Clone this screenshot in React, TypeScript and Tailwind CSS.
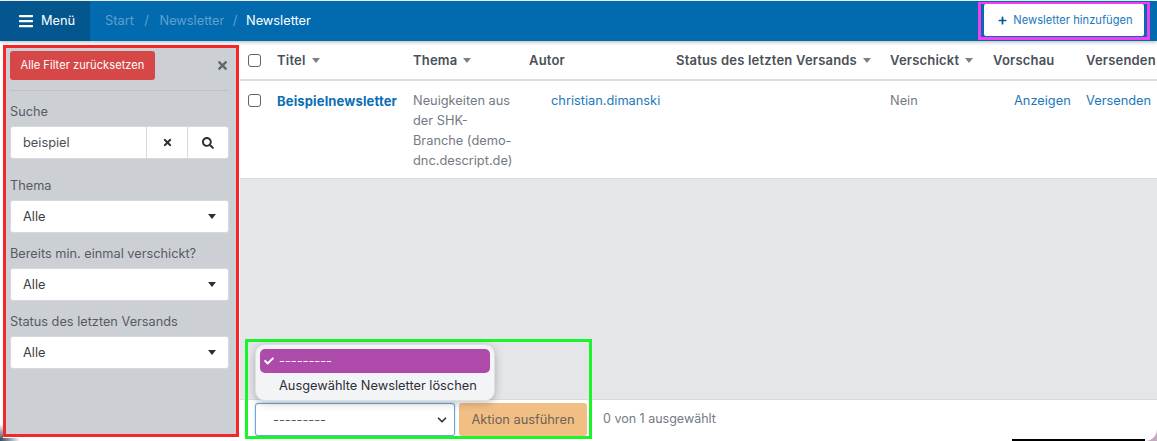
import React from "react";
import { FaBars, FaPlus, FaSearch, FaTimes, FaCheck } from "react-icons/fa";
import { ChevronDown } from "lucide-react";

const Caret = ({ color = "border-t-[#7a7f88]" }: { color?: string }) => (
  <span className={`inline-block w-0 h-0 border-x-[4px] border-x-transparent border-t-[5px] ${color}`} />
);

const Th = ({ children, sort }: { children: React.ReactNode; sort?: boolean }) => (
  <div className="flex items-center gap-[6px] text-[13px] tracking-[0.2px] font-semibold text-[#4b5058]">
    <span>{children}</span>
    {sort && <Caret />}
  </div>
);

const FilterSelect = ({ label, cls }: { label: string; cls: string }) => (
  <div className={cls}>
    <div className="text-[12.75px] leading-[19px] text-[#565b63]">{label}</div>
    <div className="mt-[5px] h-[33px] bg-white rounded-[3px] border border-[#d6d8dc] flex items-center justify-between pl-[12px] pr-[12px] text-[12.8px] text-[#3b3f46]">
      <span>Alle</span>
      <Caret color="border-t-[#2b2f36]" />
    </div>
  </div>
);

const cols = "grid grid-cols-[37px_136px_116px_147px_214px_103px_93px_71px]";

export default function App() {
  return (
    <div className="relative w-[1157px] h-[441px] overflow-hidden bg-white text-[12.8px] font-['Inter','Liberation_Sans',sans-serif]">
      <header className="mt-[1px] h-[40px] bg-[#026bb0] flex items-stretch shadow-[0_1px_4px_rgba(0,0,0,0.3)] relative z-10">
        <div className="w-[90px] bg-[#04568e] flex items-center gap-[7px] pl-[18px] text-white">
          <FaBars size={16} />
          <span>Menü</span>
        </div>
        <nav className="flex items-center pl-[15px] text-[#5fa0cd]">
          <span>Start</span>
          <span className="mx-[10.5px]">/</span>
          <span>Newsletter</span>
          <span className="mx-[8.5px]">/</span>
          <span className="text-white">Newsletter</span>
        </nav>
        <div className="ml-auto mr-[7px] mt-[1px] h-[38px] w-[172px] border-[3px] border-t-[2px] border-[#f53df0] flex items-stretch">
          <div className="flex-1 mx-[3px] mb-[1px] pl-[3px] bg-white flex items-center justify-center gap-[6px] text-[11.1px] tracking-[0.05px] text-[#1a78bb] rounded-[2px]">
            <FaPlus size={9} className="text-[#04568e]" />
            <span>Newsletter hinzufügen</span>
          </div>
        </div>
      </header>

      <div className="flex h-[400px]">
        <aside className="w-[240px] pt-[4px] pb-[4px] pl-[3px] pr-[1px] shrink-0 bg-white">
          <div className="h-full border-[3px] border-[#f5262a] bg-[#ccd0d5] pl-[4px] pr-[7px] pt-[3px]">
            <div className="flex items-center justify-between">
              <div className="w-[145px] h-[29px] bg-[#d64848] rounded-[3px] text-white text-[11.1px] tracking-[0.05px] flex items-center justify-center">
                Alle Filter zurücksetzen
              </div>
              <FaTimes size={13} className="text-[#62666d]" />
            </div>
            <div className="mt-[10px] border-t border-[#bdc1c6]" />
            <div className="mt-[11px] text-[12.75px] leading-[19px] text-[#565b63]">Suche</div>
            <div className="mt-[5px] h-[33px] bg-white rounded-[3px] border border-[#d6d8dc] flex items-stretch text-[12.8px] text-[#4a4e55]">
              <div className="w-[135px] flex items-center pl-[12px]">beispiel</div>
              <div className="w-[41px] border-l border-[#d6d8dc] flex items-center justify-center">
                <FaTimes size={11} className="text-[#2b2f36]" />
              </div>
              <div className="flex-1 border-l border-[#d6d8dc] flex items-center justify-center">
                <FaSearch size={12} className="text-[#2b2f36]" />
              </div>
            </div>
            <FilterSelect cls="mt-[17px]" label="Thema" />
            <FilterSelect cls="mt-[11px]" label="Bereits min. einmal verschickt?" />
            <FilterSelect cls="mt-[11px]" label="Status des letzten Versands" />
          </div>
        </aside>

        <main className="flex-1 flex flex-col min-w-0 relative">
          <div className={`${cols} h-[40px] pt-[1px] items-center border-b-[2px] border-[#dcdde0] whitespace-nowrap`}>
            <div className="pl-[8px] flex">
              <span className="w-[13px] h-[13px] border border-[#5f6368] rounded-[3px] bg-white" />
            </div>
            <Th sort>Titel</Th>
            <Th sort>Thema</Th>
            <Th>Autor</Th>
            <Th sort>Status des letzten Versands</Th>
            <Th sort>Verschickt</Th>
            <Th>Vorschau</Th>
            <Th>Versenden</Th>
          </div>
          <div className={`${cols} h-[98px] border-b border-[#dcdde0] pt-[10px] leading-[20px] text-[#747a85]`}>
            <div className="pl-[8px] pt-[3px]">
              <span className="block w-[13px] h-[13px] border border-[#5f6368] rounded-[3px] bg-white" />
            </div>
            <div className="font-bold text-[13px] tracking-[0.15px] text-[#0b6fb4] whitespace-nowrap">Beispielnewsletter</div>
            <div className="whitespace-nowrap">
              Neuigkeiten aus<br />der SHK-<br />Branche (demo-<br />dnc.descript.de)
            </div>
            <div className="pl-[22px] text-[#1a78bb]">christian.dimanski</div>
            <div />
            <div>Nein</div>
            <div className="pl-[21px] text-[#1a78bb]">Anzeigen</div>
            <div className="text-[#1a78bb]">Versenden</div>
          </div>
          <div className="flex-1 bg-[#e4e6ea]" />
          <div className="h-[42px] border-t border-[#d9dadd] flex items-start pt-[3px] pl-[15px]">
            <div className="w-[200px] h-[33px] border border-[#6aa6dc] rounded-[3px] bg-white shadow-[0_0_2px_#9cc7ee] flex items-center justify-between pl-[17px] pr-[5px] text-[#565b63]">
              <span>---------</span>
              <ChevronDown size={14} strokeWidth={3} className="text-[#33373d]" />
            </div>
            <div className="ml-[4px] w-[128px] h-[33px] bg-[#f1bf84] rounded-[3px] flex items-center justify-center text-[#6b6459]">
              Aktion ausführen
            </div>
            <span className="ml-[16px] h-[33px] flex items-center text-[#747a85] text-[12.5px]">0 von 1 ausgewählt</span>
          </div>

          <div className="absolute left-[5px] top-[298px] w-[347px] h-[100px] border-[3px] border-[#19f52a] pointer-events-none" />
          <div className="absolute left-[15px] top-[303px] w-[240px] h-[57px] rounded-[10px] bg-[#f3f4f6] border border-[#dfe0e3] shadow-[0_2px_8px_rgba(0,0,0,0.25)] p-[4px] text-[#2b2f36]">
            <div className="h-[24px] rounded-[5px] bg-[#ae4aaa] text-white flex items-center pl-[4px] gap-[5px]">
              <FaCheck size={10} />
              <span>---------</span>
            </div>
            <div className="h-[25px] flex items-center pl-[19px] whitespace-nowrap">Ausgewählte Newsletter löschen</div>
          </div>
        </main>
      </div>

      <div className="absolute left-[1012px] right-[12px] top-[439px] h-[2px] bg-black" />
      <div className="absolute right-0 top-[429px] w-[12px] h-[12px] bg-[#c4a8bd]">
        <div className="w-full h-full bg-white rounded-br-[12px]" />
      </div>
      <div className="absolute left-0 top-[424px] w-[3px] h-[17px] bg-gradient-to-b from-white to-[#3b4a5a]" />
      <div className="absolute left-0 top-[438px] w-[20px] h-[3px] bg-gradient-to-r from-[#3b4a5a] to-white" />
    </div>
  );
}
